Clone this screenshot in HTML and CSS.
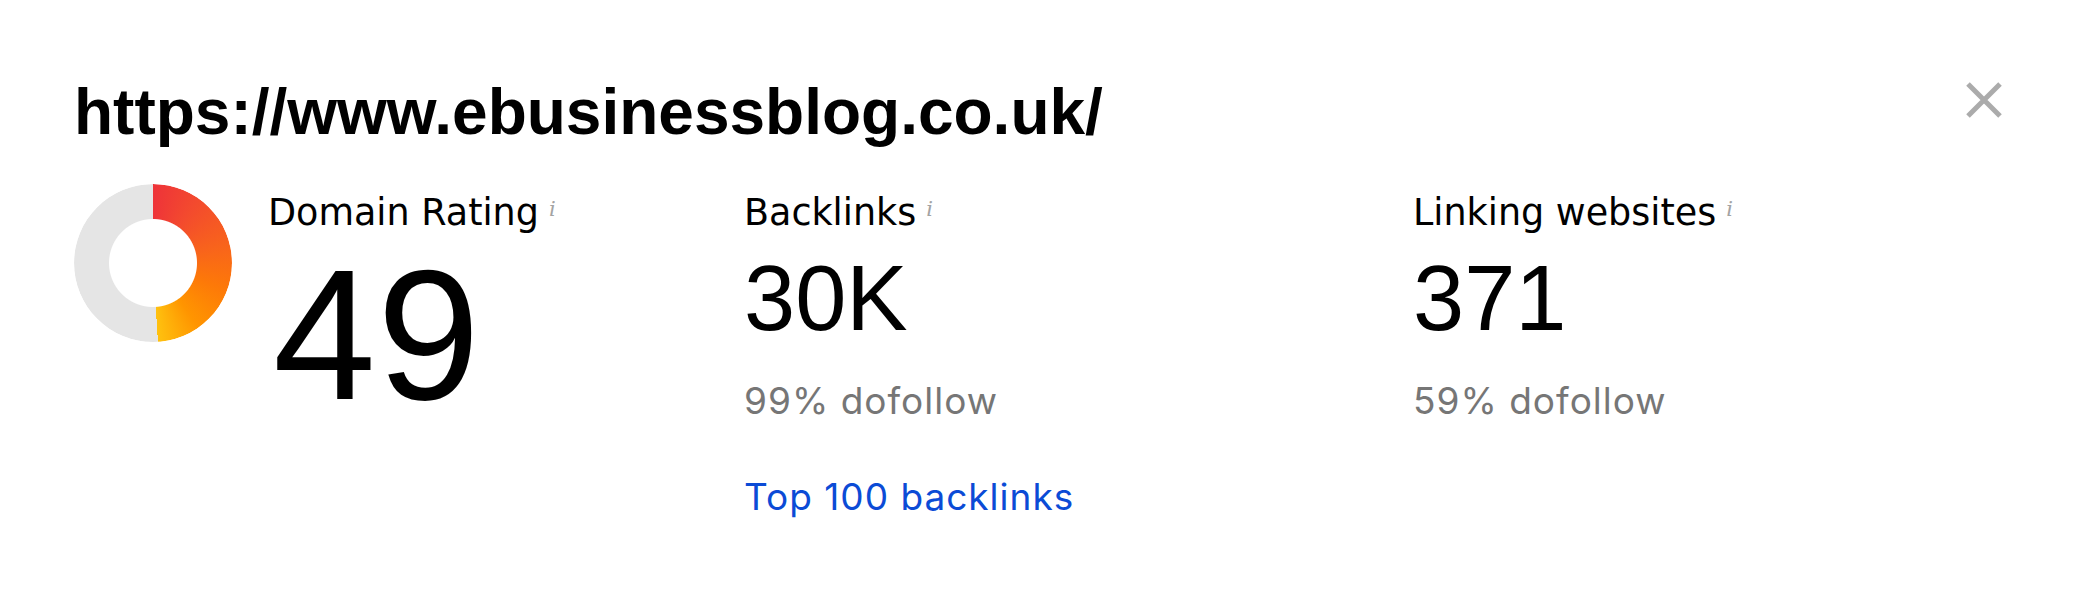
FILE: index.html
```html
<!DOCTYPE html>
<html lang="en">
<head>
<meta charset="utf-8">
<title>ebusinessblog.co.uk</title>
<link rel="stylesheet" href="styles.css">
</head>
<body>
<div class="panel">
  <button class="close" aria-label="Close">
    <svg width="36" height="36" viewBox="0 0 36 36"><path d="M2 2 L34 34 M34 2 L2 34" stroke="#ababab" stroke-width="5" fill="none"/></svg>
  </button>
  <h1 class="url">https://www.ebusinessblog.co.uk/</h1>
  <div class="metrics">
    <div class="metric metric-dr">
      <div class="donut"></div>
      <div class="dr-text">
        <div class="label">Domain Rating<span class="info">i</span></div>
        <div class="value value-big">49</div>
      </div>
    </div>
    <div class="metric">
      <div class="label">Backlinks<span class="info">i</span></div>
      <div class="value">30K</div>
      <div class="sub">99% dofollow</div>
      <a class="link" href="#">Top 100 backlinks</a>
    </div>
    <div class="metric">
      <div class="label">Linking websites<span class="info">i</span></div>
      <div class="value">371</div>
      <div class="sub">59% dofollow</div>
    </div>
  </div>
</div>
</body>
</html>
```
FILE: styles.css
```css
html, body {
  margin: 0;
  padding: 0;
  background: #ffffff;
}

.panel {
  position: relative;
  padding: 75px 0 0 74px;
  color: #000;
}

.close {
  position: absolute;
  top: 82px;
  right: 82px;
  width: 36px;
  height: 36px;
  padding: 0;
  border: 0;
  background: none;
  cursor: pointer;
}

.close svg {
  display: block;
}

.url {
  margin: 0 0 35px 0;
  font-family: "Liberation Sans", Arial, sans-serif;
  font-weight: 700;
  font-size: 64px;
  line-height: 74px;
  color: #000;
}

.metrics {
  display: grid;
  grid-template-columns: 670px 669px 1fr;
  align-items: start;
}

.metric-dr {
  display: flex;
  align-items: flex-start;
  gap: 36px;
}

.donut {
  flex: none;
  width: 158px;
  height: 158px;
  border-radius: 50%;
  background: conic-gradient(
    #ee3339 0deg,
    #f34a2e 35deg,
    #f8631c 75deg,
    #fd7908 110deg,
    #ff9500 145deg,
    #ffc10f 176.4deg,
    #e5e5e5 176.4deg 360deg
  );
  -webkit-mask: radial-gradient(circle, transparent 43.5px, #000 44.5px);
  mask: radial-gradient(circle, transparent 43.5px, #000 44.5px);
}

.label {
  font-family: "DejaVu Sans", sans-serif;
  font-size: 36.5px;
  line-height: 50px;
  color: #000;
  white-space: nowrap;
}

.info {
  margin-left: 10px;
  font-family: "DejaVu Serif", "Liberation Serif", serif;
  font-style: italic;
  font-size: 21px;
  color: #a3a3a3;
  vertical-align: 9px;
}

.value {
  margin-top: 14px;
  font-family: "Liberation Sans", Arial, sans-serif;
  font-size: 92px;
  line-height: 92px;
  color: #000;
}

.value-big {
  margin-top: 7px;
  margin-left: 5px;
  font-size: 185px;
  line-height: 180px;
  letter-spacing: 1px;
}

.sub {
  margin-top: 35px;
  font-family: Inter, "Noto Sans", sans-serif;
  font-size: 37px;
  line-height: 44px;
  letter-spacing: 1px;
  color: #767676;
}

.link {
  display: block;
  width: fit-content;
  margin-top: 52px;
  font-family: Inter, "Noto Sans", sans-serif;
  font-size: 37px;
  line-height: 44px;
  letter-spacing: 1px;
  color: #0b4bd6;
  text-decoration: none;
}
```
